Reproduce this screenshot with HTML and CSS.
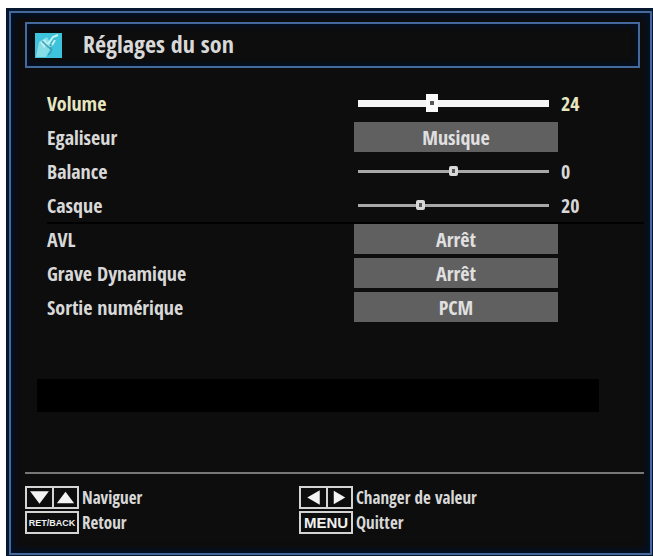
FILE: index.html
```html
<!DOCTYPE html>
<html lang="fr">

<head>
    <meta charset="UTF-8">
    <meta name="viewport" content="width=device-width, initial-scale=1.0">
    <title>Réglages du son</title>
    <link rel="stylesheet" href="styles.css">
</head>

<body>
    <main class="panel">
        <header class="title-bar">
            <svg class="title-icon" viewBox="0 0 27 25" aria-hidden="true">
                <rect width="27" height="25" fill="#3ec3dc" />
                <path d="M1 24L4 9L12 4L17 13L11 24Z" fill="#85dde6" />
                <path d="M5 9L10 6L13 11L9 15Z" fill="#b9eff0" />
                <path d="M7 8L12 13L17 17M15 13L20 6M16 14V19L13 22" fill="none" stroke="#3a9db3" stroke-width="1.5" />
                <path d="M13 11L18 4L23 2M17 12L20 7" fill="none" stroke="#c3f5f5" stroke-width="2" />
            </svg>
            <h1>Réglages du son</h1>
        </header>

        <form class="settings">
            <div class="row active">
                <label for="volume">Volume</label>
                <input type="range" id="volume" min="0" max="63" value="24">
                <output for="volume">24</output>
            </div>
            <div class="row">
                <label for="egaliseur">Egaliseur</label>
                <select id="egaliseur">
                    <option>Musique</option>
                </select>
            </div>
            <div class="row">
                <label for="balance">Balance</label>
                <input type="range" id="balance" min="-31" max="31" value="0">
                <output for="balance">0</output>
            </div>
            <div class="row">
                <label for="casque">Casque</label>
                <input type="range" id="casque" min="0" max="63" value="20">
                <output for="casque">20</output>
            </div>
            <div class="row split">
                <label for="avl">AVL</label>
                <select id="avl">
                    <option>Arrêt</option>
                </select>
            </div>
            <div class="row">
                <label for="grave">Grave Dynamique</label>
                <select id="grave">
                    <option>Arrêt</option>
                </select>
            </div>
            <div class="row">
                <label for="sortie">Sortie numérique</label>
                <select id="sortie">
                    <option>PCM</option>
                </select>
            </div>
        </form>

        <div class="message"></div>

        <footer class="help">
            <div class="hint">
                <kbd class="key arrows">
                    <svg viewBox="0 0 24 16"><path d="M3 2H21L12 14Z" /></svg>
                    <svg viewBox="0 0 24 16"><path d="M3 14H21L12 2Z" /></svg>
                </kbd>
                <span>Naviguer</span>
            </div>
            <div class="hint">
                <kbd class="key arrows">
                    <svg viewBox="0 0 24 16"><path d="M18 1V15L6 8Z" /></svg>
                    <svg viewBox="0 0 24 16"><path d="M6 1V15L18 8Z" /></svg>
                </kbd>
                <span>Changer de valeur</span>
            </div>
            <div class="hint">
                <kbd class="key small">RET/BACK</kbd>
                <span>Retour</span>
            </div>
            <div class="hint">
                <kbd class="key">MENU</kbd>
                <span>Quitter</span>
            </div>
        </footer>
    </main>

    <script>
        // affiche la valeur à droite de chaque curseur
        let sliders = document.querySelectorAll('.row input')
        for (let i = 0; i < sliders.length; i++) {
            sliders[i].oninput = function() {
                this.nextElementSibling.value = this.value
            }
        }
    </script>
</body>

</html>
```

FILE: styles.css
```css
* {
    box-sizing: border-box;
    padding: 0;
    margin: 0;
}

body {
    min-height: 100vh;
    padding: 7px 0 0 6px;
    display: flex;
    background: #fff;
    font-family: "Open Sans Condensed", "Liberation Sans Narrow", "Liberation Sans", sans-serif;
    font-size: 20px;
    color: #d8d8d8;
}

.panel {
    flex: 1;
    display: flex;
    flex-direction: column;
    padding: 9px 6px 0 14px;
    background: #0d0d0d;
    border: 2px solid #45699b;
    outline: 3px solid #06182f;
    margin: 4px 1px 1px 3px;
    box-shadow: inset 0 0 6px 3px #00112a;
}

/* titre */

.title-bar {
    display: flex;
    align-items: center;
    gap: 21px;
    height: 46px;
    margin-right: 4px;
    padding: 0 8px;
    border: 2px solid #45699b;
    box-shadow: inset 0 0 5px 2px #00112a;
}

.title-icon {
    width: 27px;
    height: 25px;
}

.title-bar h1 {
    font-size: 24px;
    line-height: 34px;
    padding-bottom: 2px;
    font-weight: bold;
}

/* réglages */

.settings {
    display: grid;
    gap: 4px;
    margin-top: 20px;
    padding-left: 22px;
}

.row {
    display: grid;
    grid-template-columns: 1fr 204px 86px;
    align-items: center;
    height: 30px;
    font-weight: bold;
}

.row.active {
    color: #e6e6c0;
}

/* trait noir au-dessus de la ligne */
.row.split {
    box-shadow: 0 -2px #000;
}

.row output {
    padding-left: 3px;
}

.row select {
    appearance: none;
    width: 100%;
    height: 30px;
    border: none;
    background: #606060;
    color: #e0e0e0;
    font: inherit;
    text-align: center;
    text-align-last: center;
}

.row input {
    appearance: none;
    height: 18px;
    margin: 0 9px 0 4px;
    background: linear-gradient(#a8a8a8, #a8a8a8) center / 100% 3px no-repeat;
}

.row input::-webkit-slider-thumb {
    appearance: none;
    width: 9px;
    height: 10px;
    border: 3px solid #d8d8d8;
    border-radius: 2px;
    background: #555;
}

.row.active input {
    background: linear-gradient(#f4f4f4, #f4f4f4) center / 100% 7px no-repeat;
}

.row.active input::-webkit-slider-thumb {
    width: 12px;
    height: 18px;
    border: 7px solid #fafafa;
    border-width: 7px 4px;
    border-radius: 0;
}

/* zone de message */

.message {
    height: 33px;
    margin: 57px 45px 0 12px;
    background: #000;
}

/* aide des touches */

.help {
    display: grid;
    grid-template-columns: 274px 1fr;
    gap: 2px 0;
    margin-top: 60px;
    padding-top: 12px;
    border-top: 2px solid #777;
    font-size: 17px;
}

.hint {
    display: flex;
    align-items: center;
    gap: 3px;
}

.key {
    display: flex;
    align-items: center;
    justify-content: center;
    width: 54px;
    height: 23px;
    border: 2px solid #d4d4d4;
    color: #f0f0f0;
    font-family: "Liberation Sans", sans-serif;
    font-size: 15px;
    font-weight: bold;
}

.key.small {
    font-size: 9px;
}

.arrows svg {
    width: 25px;
    height: 19px;
    fill: #f4f4f4;
}

.arrows svg + svg {
    border-left: 2px solid #d4d4d4;
}
```
